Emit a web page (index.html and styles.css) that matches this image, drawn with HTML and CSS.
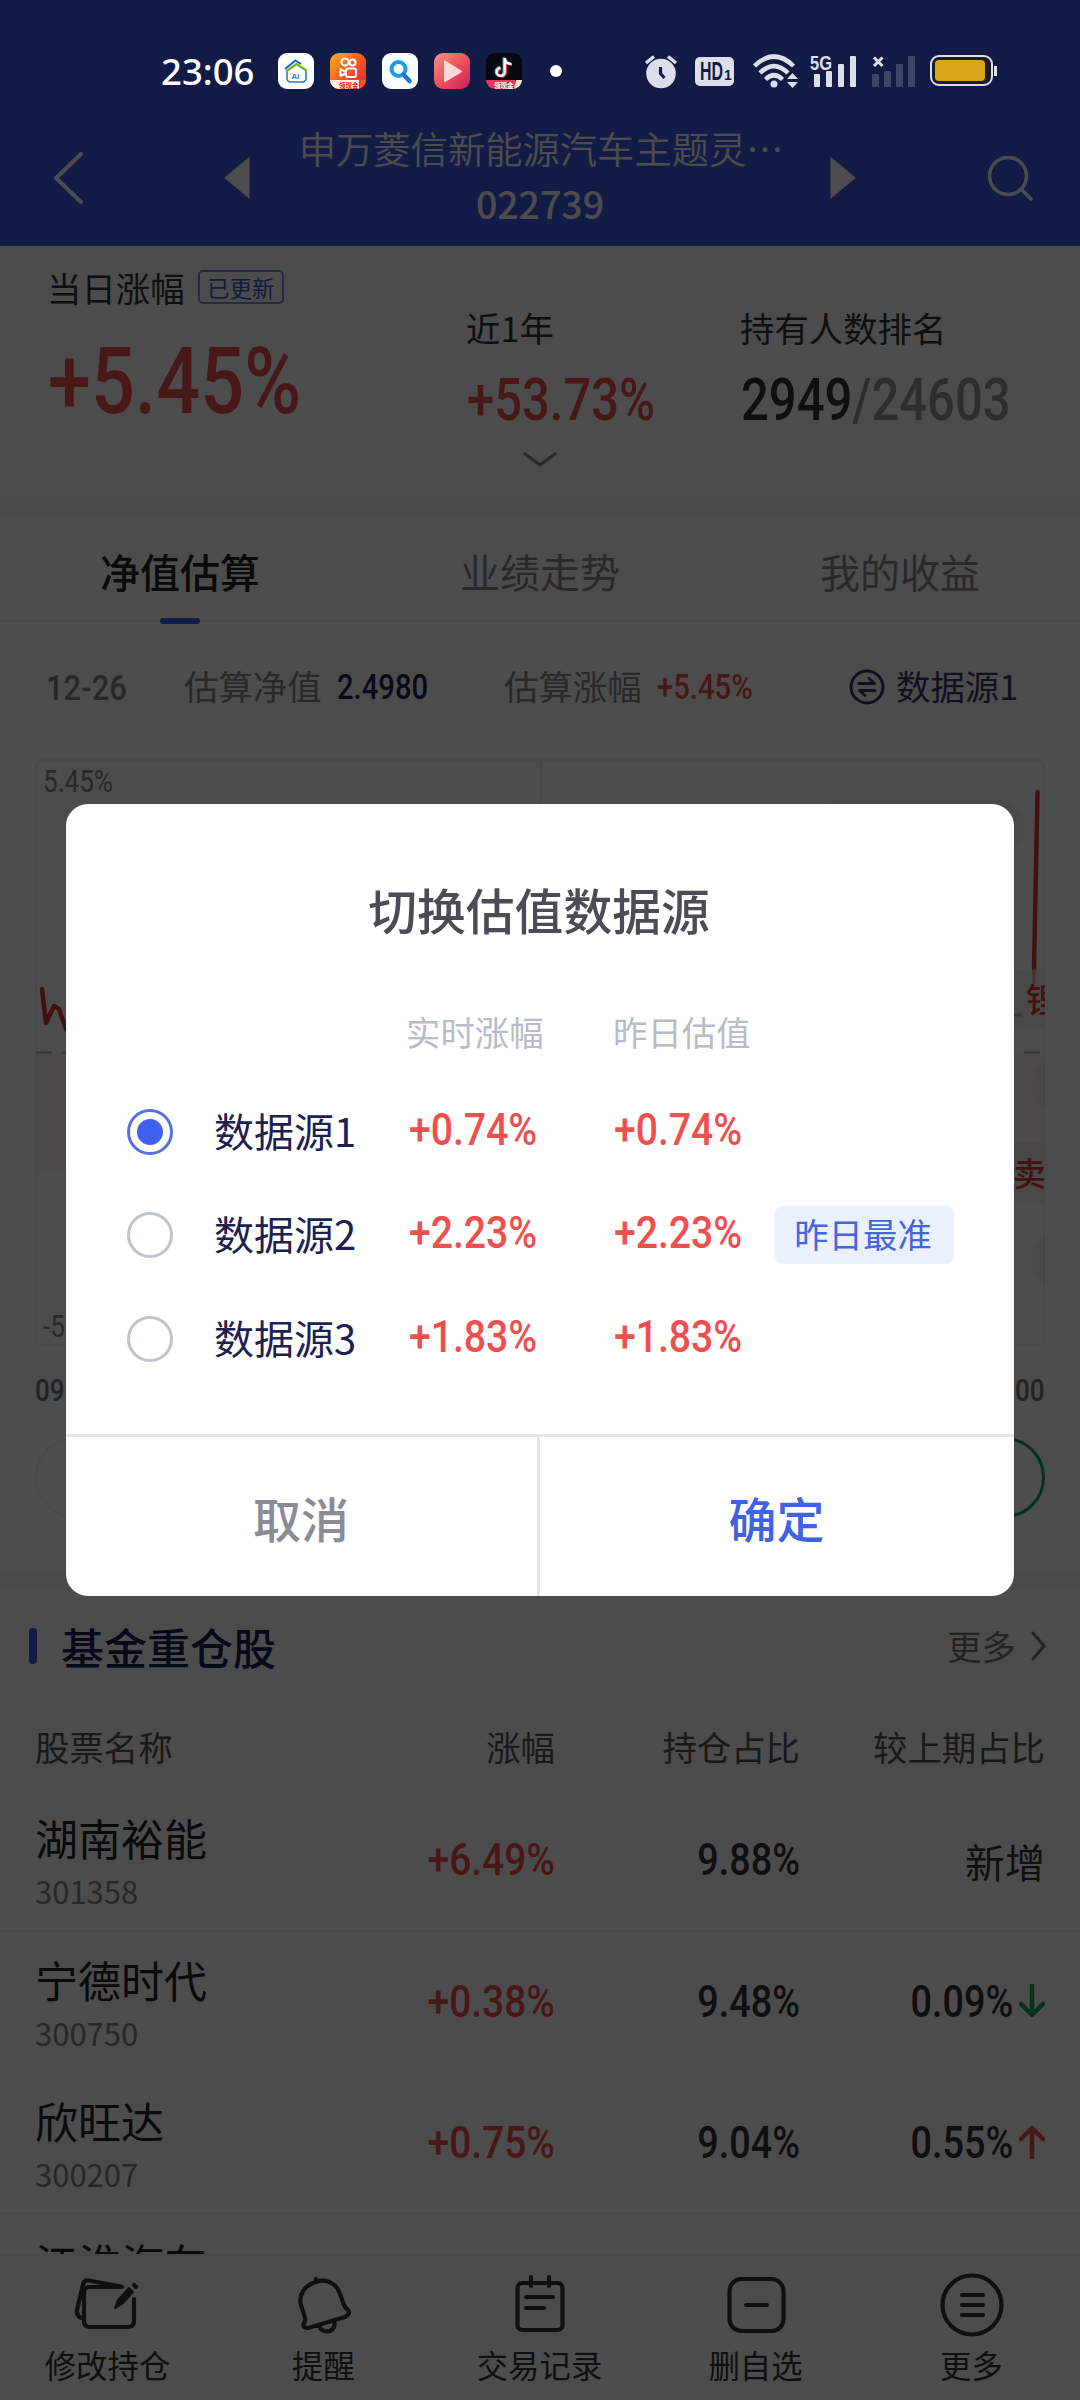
FILE: index.html
```html
<!DOCTYPE html>
<html lang="zh-CN">
<head>
<meta charset="utf-8">
<title>基金详情</title>
<link rel="stylesheet" href="styles.css">
</head>
<body>
<div class="page">
  <header class="header">
    <svg class="back" width="32" height="56" viewBox="0 0 32 56"><path d="M29 4 4 28 29 52"/></svg>
    <svg class="tri prev" width="26" height="42" viewBox="0 0 26 42"><path d="M25 1V41L1 21Z"/></svg>
    <div class="fund">
      <div class="fund-name">申万菱信新能源汽车主题灵<span class="dots">⋯</span></div>
      <div class="fund-code">022739</div>
    </div>
    <svg class="tri next" width="26" height="42" viewBox="0 0 26 42"><path d="M1 1V41L25 21Z"/></svg>
    <svg class="search" width="46" height="46" viewBox="0 0 46 46"><circle cx="20" cy="20" r="18.5"/><path d="M33 33 43 43"/></svg>
  </header>

  <section class="summary">
    <div class="sum-main">
      <div class="sum-label">当日涨幅<span class="badge">已更新</span></div>
      <div class="num sum-big red">+5.45%</div>
    </div>
    <div class="sum-item">
      <div class="sum-label">近1年</div>
      <div class="num sum-mid red">+53.73%</div>
    </div>
    <div class="sum-item">
      <div class="sum-label">持有人数排名</div>
      <div class="num sum-mid rank">2949<span class="total">/24603</span></div>
    </div>
    <svg class="expand" width="34" height="16" viewBox="0 0 34 16"><path d="M2 2 17 13 32 2"/></svg>
  </section>

  <nav class="tabs">
    <div class="tab active">净值估算</div>
    <div class="tab">业绩走势</div>
    <div class="tab">我的收益</div>
  </nav>

  <section class="estimate">
    <div class="info">
      <span class="num date">12-26</span>
      <span class="lbl">估算净值</span>
      <span class="num nav">2.4980</span>
      <span class="lbl">估算涨幅</span>
      <span class="num red">+5.45%</span>
      <svg width="36" height="36" viewBox="0 0 36 36"><circle cx="18" cy="18" r="16"/><path d="M10 14.500H25M20 9.500 25.500 14.500M26 21.500H11M16 26.500 10.500 21.500"/></svg>
      <span class="lbl source">数据源1</span>
    </div>
    <div class="chart">
      <svg width="1010" height="587" viewBox="0 0 1010 587">
        <rect class="area" x="2" y="294" width="1006" height="120"/>
        <rect class="grid" x="1" y="1" width="1008" height="585" rx="6"/>
        <path class="grid" d="M506 1V586"/>
        <path class="zero" d="M2 293.500H1006"/>
        <rect class="bubble" x="780" y="40" width="210" height="56" rx="28"/>
        <rect class="bubble" x="900" y="211" width="109" height="59"/>
        <rect class="bubble" x="900" y="383" width="109" height="61"/>
        <circle class="bubble" cx="1024" cy="327" r="28"/>
        <circle class="bubble" cx="1024" cy="501" r="28"/>
        <path class="line" d="M7 230 11 264 19 247 24 250 31 270M1002.500 33 999 210"/>
        <path class="avg" d="M999 211V224M960 256H986"/>
        <text class="mark" x="991" y="253">锂</text>
        <text class="mark" x="978" y="427">卖</text>
      </svg>
      <span class="num top">5.45%</span>
      <span class="num low">-5.45%</span>
    </div>
    <div class="times"><span class="num">09:30</span><span class="num right">15:00</span></div>
    <div class="actions"><div class="pill"></div><div class="pill green"></div></div>
  </section>

  <section class="holdings">
    <div class="hold-head">
      <i class="bar"></i><h2>基金重仓股</h2>
      <span class="more">更多</span>
      <svg width="16" height="30" viewBox="0 0 16 30"><path d="M2 2 13 15 2 28"/></svg>
    </div>
    <div class="cols">
      <span>股票名称</span><span>涨幅</span><span>持仓占比</span><span>较上期占比</span>
    </div>
    <div class="stock">
      <div class="name">湖南裕能<small>301358</small></div>
      <div class="num right red">+6.49%</div><div class="num right">9.88%</div>
      <div class="new">新增</div>
    </div>
    <div class="stock">
      <div class="name">宁德时代<small>300750</small></div>
      <div class="num right red">+0.38%</div><div class="num right">9.48%</div>
      <div class="diff"><span class="num right">0.09%</span><svg class="down" width="26" height="34" viewBox="0 0 26 34"><path d="M13 2V31M2 20 13 31 24 20"/></svg></div>
    </div>
    <div class="stock">
      <div class="name">欣旺达<small>300207</small></div>
      <div class="num right red">+0.75%</div><div class="num right">9.04%</div>
      <div class="diff"><span class="num right">0.55%</span><svg class="up" width="26" height="34" viewBox="0 0 26 34"><path d="M13 32V3M2 14 13 3 24 14"/></svg></div>
    </div>
    <div class="stock cut"><div class="name">江淮汽车</div></div>
  </section>

  <footer class="toolbar">
    <div class="tool"><svg width="72" height="72" viewBox="0 0 72 72"><path d="M50 17H18q-6 0-6 6V51q0 6 6 6H56q6 0 6-6V29M49 16.500 17 10.500q-5-1-6 4L5 40q-1 5 4 8"/><path class="pen" d="M43 38 46 30 57 18 61 22 50 34Z"/><path d="M62 15 64 17"/></svg>修改持仓</div>
    <div class="tool"><svg width="72" height="72" viewBox="0 0 72 72"><path d="M28 12V9M28 12C17 15 10 25 13 35L17 48Q18 51 16 53Q14 58 20 58L57 47Q63 44 60 40Q57 38 56 35L52 24C49 14 39 8 28 12ZM31 56Q34 63 42 61Q48 58 46 51"/></svg>提醒</div>
    <div class="tool"><svg width="72" height="72" viewBox="0 0 72 72"><rect x="13.500" y="13" width="45" height="47" rx="5"/><path d="M27 7V16M45 7V16M22 27H49M22 38H40"/></svg>交易记录</div>
    <div class="tool"><svg width="72" height="72" viewBox="0 0 72 72"><rect x="9.500" y="9" width="54" height="52" rx="12"/><path d="M26 35H47"/></svg>删自选</div>
    <div class="tool"><svg width="72" height="72" viewBox="0 0 72 72"><circle cx="36" cy="35" r="29.500"/><path d="M26 25H47M26 35H47M26 45H47"/></svg>更多</div>
  </footer>

  <div class="mask">
    <div class="dialog">
      <h1>切换估值数据源</h1>
      <div class="opt opt-head"><span></span><span></span><span>实时涨幅</span><span>昨日估值</span></div>
      <div class="opt"><i class="radio on"></i><span>数据源1</span><span class="num red">+0.74%</span><span class="num red">+0.74%</span></div>
      <div class="opt"><i class="radio"></i><span>数据源2</span><span class="num red">+2.23%</span><span class="num red">+2.23%</span><b class="tag">昨日最准</b></div>
      <div class="opt"><i class="radio"></i><span>数据源3</span><span class="num red">+1.83%</span><span class="num red">+1.83%</span></div>
      <div class="buttons"><div class="cancel">取消</div><div class="ok">确定</div></div>
    </div>
  </div>

  <div class="status">
    <span class="clock">23:06</span>
    <div class="apps">
      <svg width="36" height="36" viewBox="0 0 36 36"><rect width="36" height="36" rx="9" fill="#fff"/><path d="M9 17V25Q9 29 13 29H24Q28 29 28 25V17" fill="none" stroke="#2283c6" stroke-width="1.600"/><path d="M7 16 17.500 7.500 23 11" fill="none" stroke="#1968b4" stroke-width="2"/><path d="M8 18.500 18.500 11 29 18" fill="none" stroke="#76b82a" stroke-width="2.500"/><text x="13.500" y="25.500" class="ai">AI</text></svg>
      <svg width="36" height="36" viewBox="0 0 36 36"><defs><linearGradient id="ks" x1="0" y1="0" x2="1" y2="1"><stop offset="0" stop-color="#f8b21c"/><stop offset=".45" stop-color="#fb6225"/><stop offset="1" stop-color="#ee1530"/></linearGradient><clipPath id="round"><rect width="36" height="36" rx="9"/></clipPath></defs><g clip-path="url(#round)"><rect width="36" height="36" fill="url(#ks)"/><rect y="27" width="29" height="9" fill="#fff3e4"/><path d="M29 36 31 27H36V36Z" fill="#f35a2c"/><text x="9" y="34.500" class="coin" fill="#d92316">领现金</text></g><g fill="none" stroke="#fff" stroke-width="2"><circle cx="15" cy="9" r="3.500"/><circle cx="22.500" cy="9.500" r="3"/><rect x="16" y="15.500" width="10" height="8.500" rx="2"/><path d="M15.500 19 10.500 16V23L15.500 20.500"/></g></svg>
      <svg width="36" height="36" viewBox="0 0 36 36"><rect width="36" height="36" rx="9" fill="#fafdff"/><circle cx="16.500" cy="16" r="7" fill="none" stroke="#1c9be8" stroke-width="4"/><path d="M21.500 21.500 27.500 28" stroke="#1877c8" stroke-width="4.500" stroke-linecap="round"/></svg>
      <svg width="36" height="36" viewBox="0 0 36 36"><defs><linearGradient id="vid" x1="0" y1="0" x2="1" y2="1"><stop offset="0" stop-color="#f59182"/><stop offset=".5" stop-color="#ef525a"/><stop offset="1" stop-color="#c62060"/></linearGradient></defs><rect width="36" height="36" rx="9" fill="url(#vid)"/><path d="M11 8.500V28L27 18.500Z" fill="#ffd9d6" stroke="#ffd9d6" stroke-width="2" stroke-linejoin="round"/></svg>
      <svg width="36" height="36" viewBox="0 0 36 36"><g clip-path="url(#round)"><rect width="36" height="36" fill="#07080f"/><rect y="27" width="29" height="9" fill="#e8395a"/><path d="M28 36 30 27H36V36Z" fill="#ffe2d4"/><text x="8" y="34.500" class="coin" fill="#fff">领现金</text></g><g fill="none" stroke-width="2.800"><path d="M18 4.500V18.500A4 4 0 1 1 14 14.500M18 5Q19 10.500 25 10.500" stroke="#27e8e6"/><path d="M19.500 5.500V19.500A4 4 0 1 1 15 15.500M19.500 6Q20.500 11.500 26 11.500" stroke="#fe2c55"/><path d="M18.800 5V19A4 4 0 1 1 14.500 15M18.800 5.500Q19.500 11 25.500 11" stroke="#fff" stroke-width="2.200"/></g></svg>
    </div>
    <i class="dot"></i>
    <svg class="alarm" width="34" height="36" viewBox="0 0 34 36"><circle cx="17" cy="20.500" r="14.800" fill="#dcdfea"/><path d="M2 10 10 3.500M32 10 24 3.500" stroke="#dcdfea" stroke-width="3.500"/><path d="M16.500 14V20.500L20.500 25" fill="none" stroke="#121c46" stroke-width="3.200"/></svg>
    <svg class="hd" width="40" height="30" viewBox="0 0 40 30"><rect width="39" height="29" rx="5" fill="#dcdfea"/><text x="5" y="23" class="hd-t" textLength="23" lengthAdjust="spacingAndGlyphs">HD<tspan class="hd-n"></tspan></text><text x="29" y="23" class="hd-n">1</text></svg>
    <svg class="wifi" width="46" height="36" viewBox="0 0 46 36"><g fill="none" stroke="#dcdfea" stroke-width="4.500"><path d="M1.500 13Q21 -6 40.500 13"/><path d="M7 20Q21 6 35 20"/><path d="M12.500 26.500Q21 18 29.500 26.500"/></g><circle cx="21" cy="31" r="3.500" fill="#dcdfea"/><path d="M39.500 20 45 26H34ZM39.500 35 45 29H34Z" fill="#dcdfea"/></svg>
    <svg class="sig" width="48" height="36" viewBox="0 0 48 36"><g fill="#dcdfea"><rect x="4" y="21" width="6" height="13" rx="1"/><rect x="16" y="18" width="6" height="16" rx="1"/><rect x="28" y="11" width="6" height="23" rx="1"/><rect x="40" y="3" width="6" height="31" rx="1"/></g><text x="0" y="16.500" class="fiveg" textLength="22" lengthAdjust="spacingAndGlyphs">5G</text></svg>
    <svg class="nosig" width="46" height="36" viewBox="0 0 46 36"><g fill="#3d456b"><rect x="0" y="21" width="7" height="13" rx="1"/><rect x="12" y="18" width="7" height="16" rx="1"/><rect x="24" y="11" width="7" height="23" rx="1"/><rect x="36" y="3" width="7" height="31" rx="1"/></g><path d="M2 4.500 10.500 13M10.500 4.500 2 13" stroke="#dcdfea" stroke-width="3"/></svg>
    <svg class="batt" width="68" height="32" viewBox="0 0 68 32"><rect x="1" y="1" width="61" height="29" rx="8" fill="#1c1d2a" stroke="#dcdfea" stroke-width="2"/><rect x="5" y="5" width="50" height="21" rx="4" fill="#d9a51a"/><path d="M65.500 11V21" stroke="#dcdfea" stroke-width="3"/></svg>
  </div>
</div>
</body>
</html>
```
FILE: styles.css
```css
* { box-sizing: border-box; }
body {
  margin: 0;
  font-family: "Noto Sans CJK SC", sans-serif;
  font-size: 34.400px;
  color: #333;
}
svg { display: block; flex: none; fill: none; stroke-linecap: round; stroke-linejoin: round; }
h1, h2 { margin: 0; font-weight: 500; }
.page { position: relative; width: 1080px; height: 2400px; overflow: hidden; background: #fff; display: flex; flex-direction: column; }
.num {
  display: inline-block;
  font-family: Roboto, "Noto Sans CJK SC", sans-serif;
  font-weight: 500;
  white-space: nowrap;
  transform: scaleX(.84);
  transform-origin: left;
}
.num.right { transform-origin: right; text-align: right; }
.red { color: #f04f4f; }

/* Header */
.header { height: 246px; flex: none; background: #3c5de9; display: flex; padding: 110px 0 0 52px; align-items: flex-start; }
.header svg { stroke: #fff; stroke-width: 4; }
.back { margin-top: 40px; }
.header .tri { fill: #fff; stroke-width: 1; margin-top: 47px; }
.prev { margin-left: 140px; }
.next { margin-left: 40px; }
.header .search { margin-left: 132px; margin-top: 46px; stroke-width: 3.500; }
.fund { flex: none; width: 500px; margin-left: 40px; text-align: center; color: #fff; white-space: nowrap; margin-top: 10px; }
.fund-name { font-size: 37.300px; line-height: 56px; font-weight: 350; padding-left: 1px; }
.dots { display: inline-block; width: 36px; }
.fund-code { font-size: 37.500px; line-height: 54px; font-weight: 500; }

/* Summary */
.summary { position: relative; height: 250px; flex: none; display: grid; grid-template-columns: 419px 274px 1fr; padding-left: 48px; }
.sum-label { line-height: 40px; display: flex; align-items: center; margin-left: -1px; }
.sum-main { padding-top: 21px; }
.sum-item { padding-top: 61px; }
.badge { font-size: 22.500px; line-height: 31px; height: 34px; border: 2px solid #7b92ee; border-radius: 5px; color: #3c5de9; padding: 0 7.500px; margin-left: 13px; }
.sum-big { font-size: 92px; line-height: 92px; margin-top: 29px; }
.sum-mid { font-size: 59px; line-height: 60px; margin-top: 23px; }
.num.sum-mid { transform: scaleX(.83); }
.total { color: #999; }
.expand { position: absolute; left: 523px; top: 206px; stroke: #888; stroke-width: 3; }

/* Tabs */
.tabs { height: 126px; flex: none; border-top: 22px solid #f8f8fa; border-bottom: 2px solid #f5f5f8; display: grid; grid-template-columns: repeat(3, 1fr); }
.tab { position: relative; text-align: center; font-size: 40px; line-height: 106px; color: #8a8a92; }
.tab.active { color: #222; font-weight: 500; }
.tab.active::after { content: ""; position: absolute; left: 160px; bottom: 0; width: 40px; height: 6px; border-radius: 3px; background: #3c5de9; }

/* Estimate */
.estimate { height: 968px; flex: none; border-bottom: 20px solid #f8f8fa; }
.info { height: 137px; padding: 0 0 8px 46px; display: grid; grid-template-columns: 139px 152px 168px 152px 192px 48px auto; align-items: center; color: #8a8a92; }
.info .num { font-size: 34.800px; line-height: 40px; }
.info .lbl { margin-top: -3px; margin-left: -1px; }
.info .date { color: #888; transform: scaleX(.89); padding-top: 2px; }
.info .nav { color: #1d2150; }
.info svg { stroke: #333a70; stroke-width: 3; }
.info .source { color: #333a70; }
.chart { position: relative; width: 1010px; height: 587px; margin-left: 35px; }
.area { fill: #fdf6f5; }
.grid { stroke: #f1f1f3; stroke-width: 2; }
.zero { stroke: #b5aeae; stroke-width: 2; stroke-dasharray: 14 12; }
.bubble { fill: rgba(120, 120, 130, .07); }
.line { stroke: #d93a3a; stroke-width: 4.500; }
.avg { stroke: #f0a99b; stroke-width: 3; }
.mark { fill: #e03a3a; font-size: 33px; font-weight: 500; }
.chart .num { position: absolute; left: 8px; font-size: 31px; line-height: 36px; color: #8a8a92; font-weight: 400; }
.chart .top { top: 5px; }
.chart .low { bottom: 1px; }
.times { display: flex; justify-content: space-between; padding: 27px 35px 0; line-height: 36px; color: #777; }
.times .num { font-size: 31px; }
.actions { display: flex; justify-content: space-between; padding: 0 35px; margin-top: 28px; }
.pill { width: 240px; height: 81px; border: 2px solid #f0f0f0; border-radius: 41px; }
.pill.green { border: 3px solid #17a360; }

/* Holdings */
.holdings { height: 664px; flex: none; overflow: hidden; }
.hold-head { display: flex; align-items: center; height: 116px; padding: 0 33px 4px 29px; }
.bar { width: 8px; height: 36px; border-radius: 4px; background: #3c5de9; }
.hold-head h2 { font-size: 43px; line-height: 60px; margin-left: 24px; color: #1d2150; }
.more { margin-left: auto; margin-right: 15px; margin-top: -3px; color: #777; }
.hold-head svg { stroke: #777; stroke-width: 3; }
.cols, .stock { display: grid; grid-template-columns: 275px 245px 245px 245px; padding-left: 35px; }
.cols { height: 84px; line-height: 81px; color: #555; }
.cols span + span { text-align: right; }
.stock { height: 141.500px; border-bottom: 2px solid #f6f6f8; }
.stock .num { font-size: 45px; line-height: 50px; margin-top: 45px; }
.stock .num.red { transform: scaleX(.865); }
.stock .name { font-size: 43px; line-height: 60px; padding-top: 17px; color: #222; }
.name small { display: block; font-size: 31px; line-height: 47px; color: #888; }
.new { font-size: 40px; text-align: right; line-height: 56px; margin-top: 43px; }
.diff { display: flex; justify-content: flex-end; gap: 6px; }
.diff svg { margin-top: 52px; stroke-width: 4.500; }
.down { stroke: #0fa75c; }
.up { stroke: #f04f4f; }

/* Toolbar */
.toolbar { flex: 1; border-top: 2px solid #f3f3f3; display: grid; grid-template-columns: repeat(5, 216px); background: #fff; }
.tool { display: flex; flex-direction: column; align-items: center; font-size: 31.400px; line-height: 46px; padding: 14px 1px 0 0; }
.tool svg { stroke: #333; stroke-width: 4.200; }
.tool .pen { fill: #333; stroke-width: 2; }

/* Dialog */
.mask { position: absolute; inset: 0; background: rgba(0, 0, 0, .7); display: flex; align-items: center; justify-content: center; }
.dialog { width: 948px; height: 792px; background: #fff; border-radius: 22px; overflow: hidden; }
.dialog h1 { font-size: 48.800px; line-height: 72px; margin: 69px 2px 48px 0; text-align: center; color: #4c4c56; }
.opt { height: 103.500px; display: grid; grid-template-columns: 87px 195px 205px 161px auto; align-items: center; padding-left: 61px; font-size: 40px; color: #1d2150; }
.opt > span:nth-child(2) { position: relative; top: -2px; }
.opt-head { height: 76px; color: #b7bcc8; font-size: 34.400px; padding-left: 58px; margin-bottom: 11px; grid-template-columns: 87px 195px 207px auto; }
.opt .num { font-size: 45px; line-height: 50px; margin-bottom: 4px; transform: scaleX(.87); }
.radio { width: 46px; height: 46px; border-radius: 50%; border: 3px solid #bfc3cd; }
.radio.on { border-color: #5470e2; background: radial-gradient(circle, #3f63ee 12.500px, #fff 13.500px); }
.tag { font-weight: 400; font-size: 34.400px; line-height: 54px; height: 58px; width: 179px; padding-right: 3px; text-align: center; color: #4565dc; background: #eaf0fd; border-radius: 8px; }
.buttons { height: 162px; margin-top: 43.500px; border-top: 3px solid #e6e6e6; display: grid; grid-template-columns: 474px 474px; }
.buttons div { text-align: center; font-size: 48px; line-height: 160px; font-weight: 500; padding-right: 1px; }
.cancel { color: #8b8b95; border-right: 3px solid #e6e6e6; }
.ok { color: #4063e4; }

/* Status bar */
.status { position: absolute; left: 0; top: 0; width: 1080px; height: 142px; display: flex; align-items: center; padding-left: 161px; }
.clock { font-family: "Noto Sans", sans-serif; font-weight: 500; font-size: 36.500px; color: #fff; width: 117px; margin-top: -1px; }
.apps { display: flex; gap: 16px; }
.ai { font: 700 8px "Liberation Sans", sans-serif; fill: #2b7fc4; }
.coin { font-size: 6.500px; font-weight: 700; }
.dot { width: 12px; height: 12px; border-radius: 50%; background: #fff; margin: 0 82px 0 28px; }
.hd { margin-left: 17px; margin-top: 2px; }
.hd-t { font: 700 25px "Liberation Sans", sans-serif; fill: #121c46; }
.hd-n { font: 700 14px "Liberation Sans", sans-serif; fill: #121c46; }
.wifi { margin-left: 18px; }
.sig { margin-left: 11px; }
.nosig { margin-left: 14px; }
.batt { margin-left: 12px; }
.status svg { stroke-linecap: butt; }
.fiveg { font: 700 21px "Liberation Sans", sans-serif; fill: #dcdfea; }
```
